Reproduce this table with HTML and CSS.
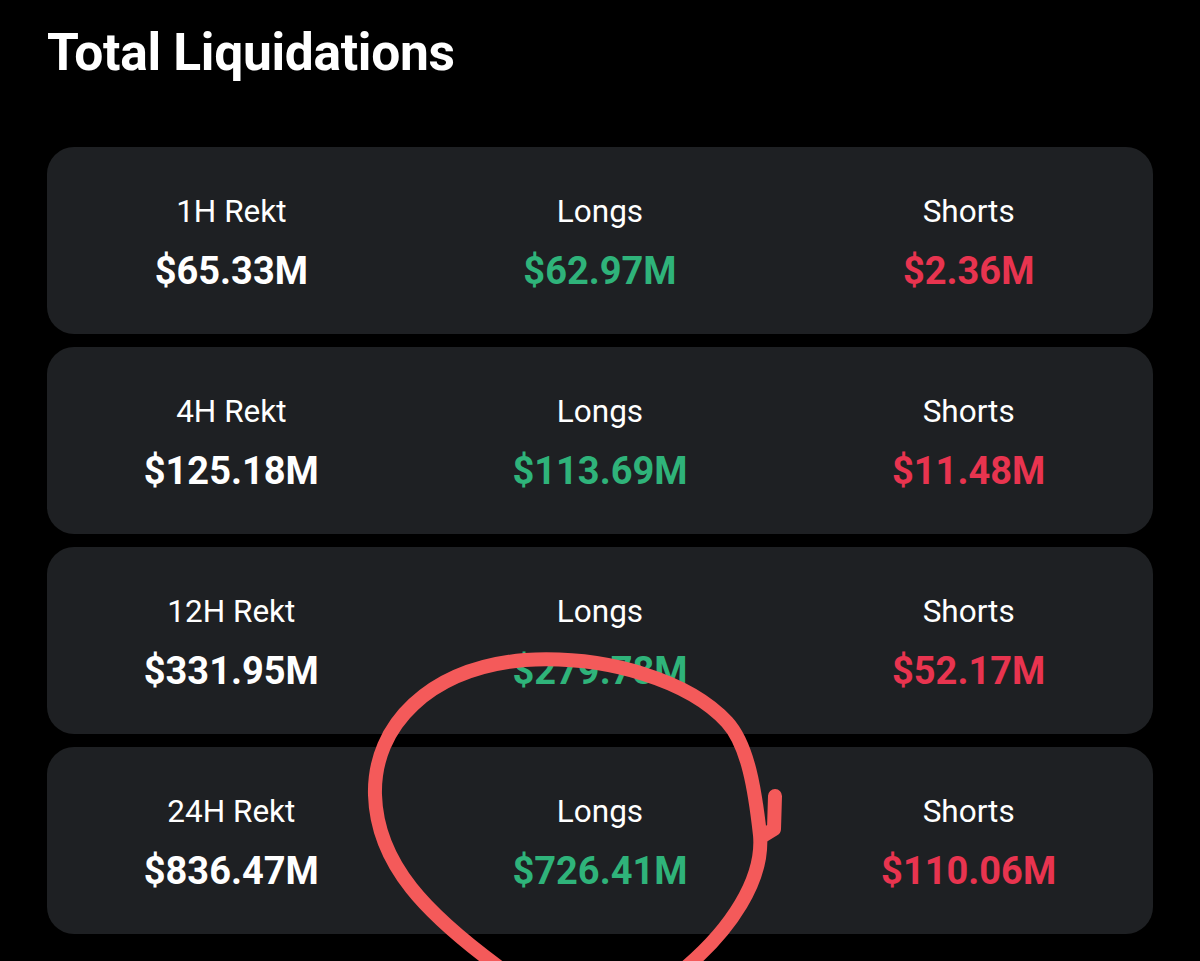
FILE: index.html
```html
<!DOCTYPE html>
<html>
<head>
<meta charset="utf-8">
<link rel="stylesheet" href="styles.css">
</head>
<body>
<div class="page">
  <h1 class="title">Total Liquidations</h1>
  <div class="cards">
    <div class="card">
      <div class="cell"><div class="label">1H Rekt</div><div class="value">$65.33M</div></div>
      <div class="cell"><div class="label">Longs</div><div class="value green">$62.97M</div></div>
      <div class="cell"><div class="label">Shorts</div><div class="value red">$2.36M</div></div>
    </div>
    <div class="card">
      <div class="cell"><div class="label">4H Rekt</div><div class="value">$125.18M</div></div>
      <div class="cell"><div class="label">Longs</div><div class="value green">$113.69M</div></div>
      <div class="cell"><div class="label">Shorts</div><div class="value red">$11.48M</div></div>
    </div>
    <div class="card">
      <div class="cell"><div class="label">12H Rekt</div><div class="value">$331.95M</div></div>
      <div class="cell"><div class="label">Longs</div><div class="value green">$279.78M</div></div>
      <div class="cell"><div class="label">Shorts</div><div class="value red">$52.17M</div></div>
    </div>
    <div class="card">
      <div class="cell"><div class="label">24H Rekt</div><div class="value">$836.47M</div></div>
      <div class="cell"><div class="label">Longs</div><div class="value green">$726.41M</div></div>
      <div class="cell"><div class="label">Shorts</div><div class="value red">$110.06M</div></div>
    </div>
  </div>
  <svg class="scribble" width="1200" height="961" viewBox="0 0 1200 961" xmlns="http://www.w3.org/2000/svg">
    <path d="M 500 968 C 428 915, 377 865, 375 795 C 373 725, 430 668, 525 660 C 610 655, 690 682, 727 722 C 748 745, 755 790, 760 835 C 764 880, 730 930, 685 968" fill="none" stroke="#f45a5a" stroke-width="14" stroke-linecap="round" stroke-linejoin="round"/>
    <path d="M 775 796 L 774 829 L 761 837" fill="none" stroke="#f45a5a" stroke-width="14" stroke-linecap="round" stroke-linejoin="round"/>
  </svg>
</div>
</body>
</html>
```
FILE: styles.css
```css
html, body {
  margin: 0;
  padding: 0;
  background: #000;
}
body {
  font-family: Roboto, "Liberation Sans", sans-serif;
  color: #fff;
  width: 1200px;
  height: 961px;
  overflow: hidden;
}
.page {
  position: relative;
  padding: 0 47px;
}
.title {
  margin: 0;
  padding-top: 21px;
  height: 147px;
  box-sizing: border-box;
  font-size: 51.5px;
  font-weight: 700;
  line-height: 64px;
  letter-spacing: -0.3px;
}
.cards {
  display: flex;
  flex-direction: column;
  gap: 13px;
}
.card {
  height: 187px;
  background: #1e2023;
  border-radius: 27px;
  display: grid;
  grid-template-columns: 1fr 1fr 1fr;
  align-items: center;
}
.cell {
  display: flex;
  flex-direction: column;
  align-items: center;
  gap: 23px;
  padding-top: 5px;
}
.label {
  font-size: 31.5px;
  line-height: 32px;
  font-weight: 400;
}
.value {
  font-size: 38px;
  line-height: 40px;
  font-weight: 700;
}
.green { color: #2fb37a; }
.red { color: #e8344f; }
.scribble {
  position: absolute;
  left: 0;
  top: 0;
  pointer-events: none;
}
```
